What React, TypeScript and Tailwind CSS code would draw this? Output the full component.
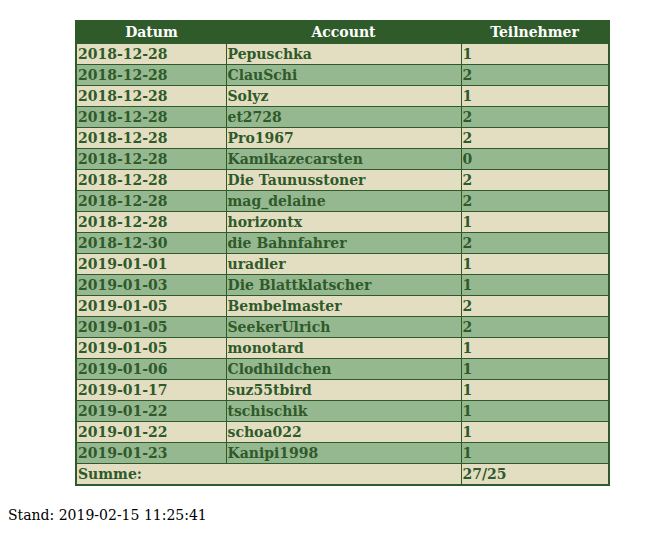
import React from 'react';

const ROWS: [string, string, string][] = [
  ['2018-12-28', 'Pepuschka', '1'],
  ['2018-12-28', 'ClauSchi', '2'],
  ['2018-12-28', 'Solyz', '1'],
  ['2018-12-28', 'et2728', '2'],
  ['2018-12-28', 'Pro1967', '2'],
  ['2018-12-28', 'Kamikazecarsten', '0'],
  ['2018-12-28', 'Die Taunusstoner', '2'],
  ['2018-12-28', 'mag_delaine', '2'],
  ['2018-12-28', 'horizontx', '1'],
  ['2018-12-30', 'die Bahnfahrer', '2'],
  ['2019-01-01', 'uradler', '1'],
  ['2019-01-03', 'Die Blattklatscher', '1'],
  ['2019-01-05', 'Bembelmaster', '2'],
  ['2019-01-05', 'SeekerUlrich', '2'],
  ['2019-01-05', 'monotard', '1'],
  ['2019-01-06', 'Clodhildchen', '1'],
  ['2019-01-17', 'suz55tbird', '1'],
  ['2019-01-22', 'tschischik', '1'],
  ['2019-01-22', 'schoa022', '1'],
  ['2019-01-23', 'Kanipi1998', '1'],
];

const cell = 'border border-[#2f5a2a] px-[1px] h-[21px] leading-none align-middle';

export default function App() {
  return (
    <div className="min-h-screen bg-white pt-[20px] font-['DejaVu_Serif',serif]">
      <table className="ml-[75px] w-[535px] border-collapse border-2 border-[#2f5a2a] text-[14px] font-bold text-[#2f5a2a]">
        <thead>
          <tr className="bg-[#2f5a2a] text-white">
            <th className="h-[22px] w-[150px]">Datum</th>
            <th className="w-[235px]">Account</th>
            <th>Teilnehmer</th>
          </tr>
        </thead>
        <tbody>
          {ROWS.map((r, i) => (
            <tr key={i} className={i % 2 === 0 ? 'bg-[#e3dec2]' : 'bg-[#96b891]'}>
              <td className={cell}>{r[0]}</td>
              <td className={cell}>{r[1]}</td>
              <td className={cell}>{r[2]}</td>
            </tr>
          ))}
          <tr className="bg-[#e3dec2]">
            <td className={cell} colSpan={2}>Summe:</td>
            <td className={cell}>27/25</td>
          </tr>
        </tbody>
      </table>
      <p className="mt-[19px] ml-[8px] text-[14px] text-black">Stand: 2019-02-15 11:25:41</p>
    </div>
  );
}
